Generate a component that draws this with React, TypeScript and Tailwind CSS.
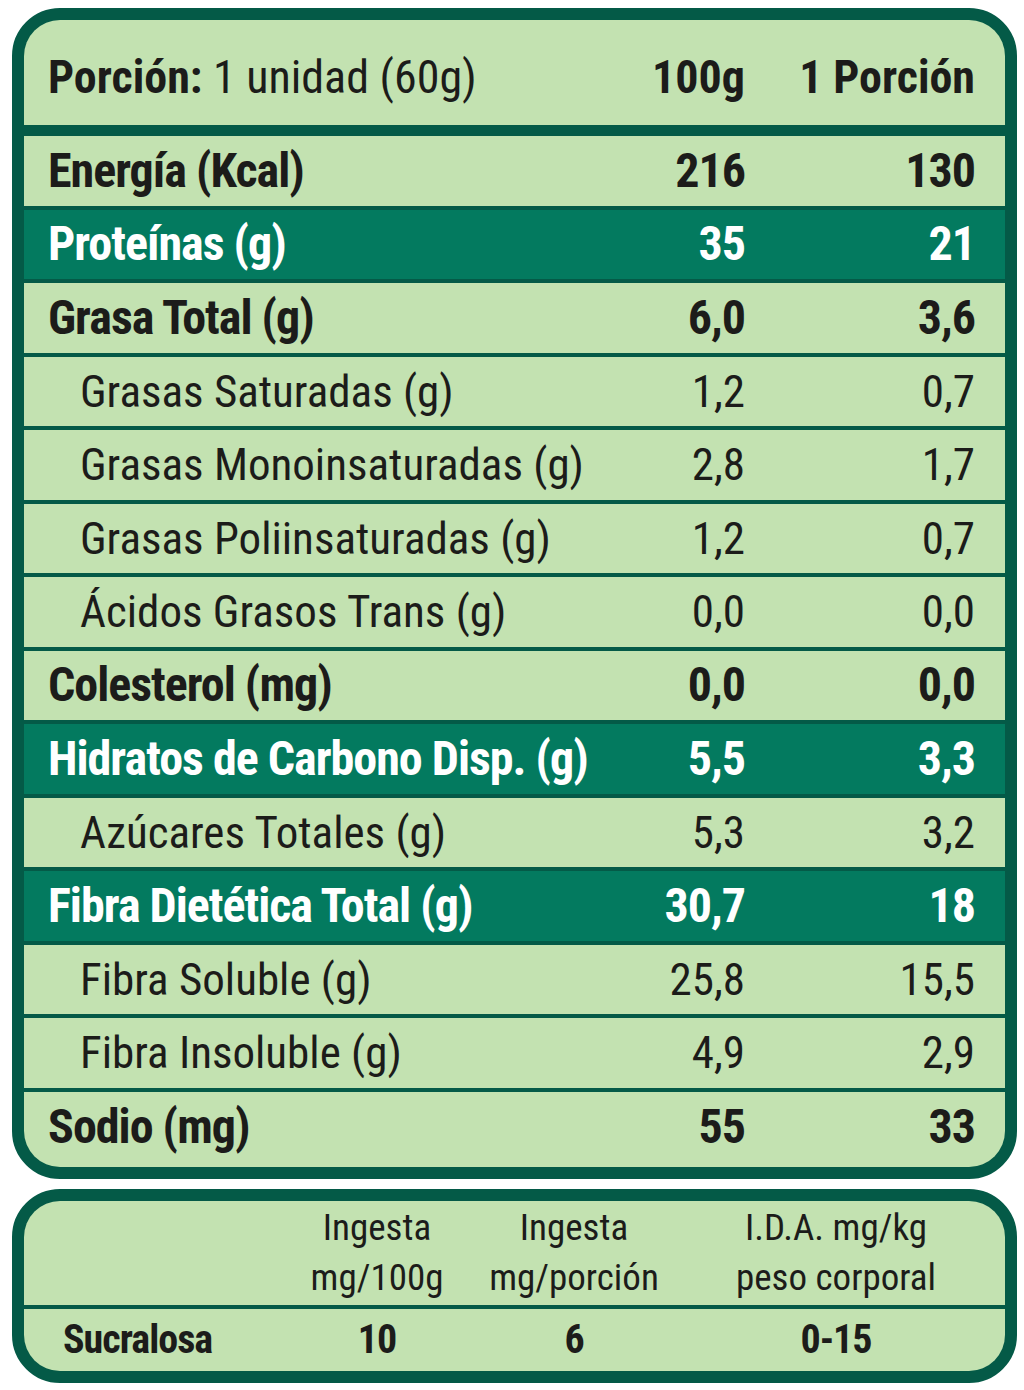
type Row = {
  label: string;
  per100: string;
  perPortion: string;
  kind: 'main' | 'sub' | 'dark';
};

const ROWS: Row[] = [
  { label: 'Energía (Kcal)', per100: '216', perPortion: '130', kind: 'main' },
  { label: 'Proteínas (g)', per100: '35', perPortion: '21', kind: 'dark' },
  { label: 'Grasa Total (g)', per100: '6,0', perPortion: '3,6', kind: 'main' },
  { label: 'Grasas Saturadas (g)', per100: '1,2', perPortion: '0,7', kind: 'sub' },
  { label: 'Grasas Monoinsaturadas (g)', per100: '2,8', perPortion: '1,7', kind: 'sub' },
  { label: 'Grasas Poliinsaturadas (g)', per100: '1,2', perPortion: '0,7', kind: 'sub' },
  { label: 'Ácidos Grasos Trans (g)', per100: '0,0', perPortion: '0,0', kind: 'sub' },
  { label: 'Colesterol (mg)', per100: '0,0', perPortion: '0,0', kind: 'main' },
  { label: 'Hidratos de Carbono Disp. (g)', per100: '5,5', perPortion: '3,3', kind: 'dark' },
  { label: 'Azúcares Totales (g)', per100: '5,3', perPortion: '3,2', kind: 'sub' },
  { label: 'Fibra Dietética Total (g)', per100: '30,7', perPortion: '18', kind: 'dark' },
  { label: 'Fibra Soluble (g)', per100: '25,8', perPortion: '15,5', kind: 'sub' },
  { label: 'Fibra Insoluble (g)', per100: '4,9', perPortion: '2,9', kind: 'sub' },
  { label: 'Sodio (mg)', per100: '55', perPortion: '33', kind: 'main' },
];

function NutritionRow({ row, last }: { row: Row; last: boolean }) {
  const isSub = row.kind === 'sub';
  const isDark = row.kind === 'dark';
  return (
    <div
      className={[
        'grid grid-cols-[minmax(0,1fr)_170px_230px] items-center pr-[30px] leading-none whitespace-nowrap',
        last ? 'h-[75px] pb-[5px]' : 'h-[69.5px]',
        isDark ? 'bg-[#037a5f] text-white' : 'bg-[#c3e2b1] text-[#1c1c1a]',
        isSub
          ? 'text-[45px] font-normal pl-[56px]'
          : 'text-[48px] font-bold tracking-[-1px] pl-[24px]',
      ].join(' ')}
    >
      <span>{row.label}</span>
      <span className="text-right">{row.per100}</span>
      <span className="text-right">{row.perPortion}</span>
    </div>
  );
}

export default function App() {
  return (
    <div className="min-h-screen bg-white pt-[8px] pl-[12px] font-['Roboto',sans-serif] [font-stretch:75%]">
      {/* tabla principal */}
      <div className="w-[1005px] rounded-[48px] border-[12px] border-[#045a47] bg-[#045a47] overflow-hidden">
        <div className="flex flex-col gap-[4px]">
          <div className="h-[105px] mb-[7px] pt-[8px] grid grid-cols-[minmax(0,1fr)_170px_230px] items-center pl-[24px] pr-[30px] bg-[#c3e2b1] text-[#1c1c1a] text-[46px] leading-none whitespace-nowrap">
            <span>
              <span className="font-bold">Porción:</span> 1 unidad (60g)
            </span>
            <span className="text-right font-bold">100g</span>
            <span className="text-right font-bold">1 Porción</span>
          </div>
          {ROWS.map((r, i) => (
            <NutritionRow key={r.label} row={r} last={i === ROWS.length - 1} />
          ))}
        </div>
      </div>

      {/* edulcorante */}
      <div className="mt-[10px] w-[1005px] rounded-[48px] border-[12px] border-[#045a47] bg-[#045a47] overflow-hidden">
        <div className="flex flex-col gap-[4px] text-[#1c1c1a]">
          <div className="h-[104px] grid grid-cols-[268px_170px_224px_300px_minmax(0,1fr)] items-center bg-[#c3e2b1] text-[37px] leading-[50px] text-center whitespace-nowrap">
            <span />
            <span>
              Ingesta
              <br />
              mg/100g
            </span>
            <span>
              Ingesta
              <br />
              mg/porción
            </span>
            <span>
              I.D.A. mg/kg
              <br />
              peso corporal
            </span>
            <span />
          </div>
          <div className="h-[62px] grid grid-cols-[268px_170px_224px_300px_minmax(0,1fr)] items-center bg-[#c3e2b1] text-[40px] font-bold tracking-[-1px] leading-none text-center">
            <span className="text-left pl-[39px]">Sucralosa</span>
            <span>10</span>
            <span>6</span>
            <span>0-15</span>
            <span />
          </div>
        </div>
      </div>
    </div>
  );
}
